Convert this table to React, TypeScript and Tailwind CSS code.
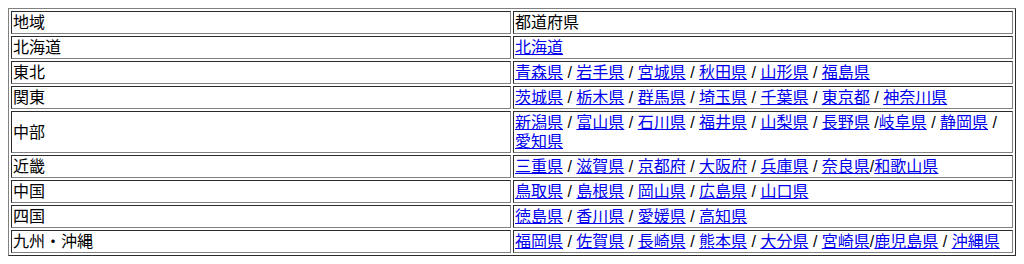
import React from "react";

type Row = { region: string; prefs: string[]; seps?: string[] };

// seps[i] is the text placed after prefs[i]
const rows: Row[] = [
  { region: "北海道", prefs: ["北海道"] },
  { region: "東北", prefs: ["青森県", "岩手県", "宮城県", "秋田県", "山形県", "福島県"] },
  { region: "関東", prefs: ["茨城県", "栃木県", "群馬県", "埼玉県", "千葉県", "東京都", "神奈川県"] },
  {
    region: "中部",
    prefs: ["新潟県", "富山県", "石川県", "福井県", "山梨県", "長野県", "岐阜県", "静岡県", "愛知県"],
    seps: [" / ", " / ", " / ", " / ", " / ", " /", " / ", " / "],
  },
  {
    region: "近畿",
    prefs: ["三重県", "滋賀県", "京都府", "大阪府", "兵庫県", "奈良県", "和歌山県"],
    seps: [" / ", " / ", " / ", " / ", " / ", "/"],
  },
  { region: "中国", prefs: ["鳥取県", "島根県", "岡山県", "広島県", "山口県"] },
  { region: "四国", prefs: ["徳島県", "香川県", "愛媛県", "高知県"] },
  {
    region: "九州・沖縄",
    prefs: ["福岡県", "佐賀県", "長崎県", "熊本県", "大分県", "宮崎県", "鹿児島県", "沖縄県"],
    seps: [" / ", " / ", " / ", " / ", " / ", "/", " / "],
  },
];

const cell =
  "w-1/2 p-px border border-[gray] [border-style:inset] align-middle text-left font-normal";

const App = () => {
  return (
    <div className="p-2 bg-white text-black text-[16px] leading-[19px] font-['Liberation_Sans','Noto_Sans_CJK_JP',sans-serif]">
      <table className="w-full border-separate border-spacing-[2px] border border-[gray] [border-style:outset]">
        <tbody>
          <tr>
            <td className={cell}>地域</td>
            <td className={cell}>都道府県</td>
          </tr>
          {rows.map((r) => (
            <tr key={r.region}>
              <td className={cell}>{r.region}</td>
              <td className={cell}>
                {r.prefs.map((p, i) => (
                  <React.Fragment key={p}>
                    <a href="#" className="text-[#0000ee] underline">
                      {p}
                    </a>
                    {i < r.prefs.length - 1 && (r.seps ? r.seps[i] : " / ")}
                  </React.Fragment>
                ))}
              </td>
            </tr>
          ))}
        </tbody>
      </table>
    </div>
  );
};

export default App;
